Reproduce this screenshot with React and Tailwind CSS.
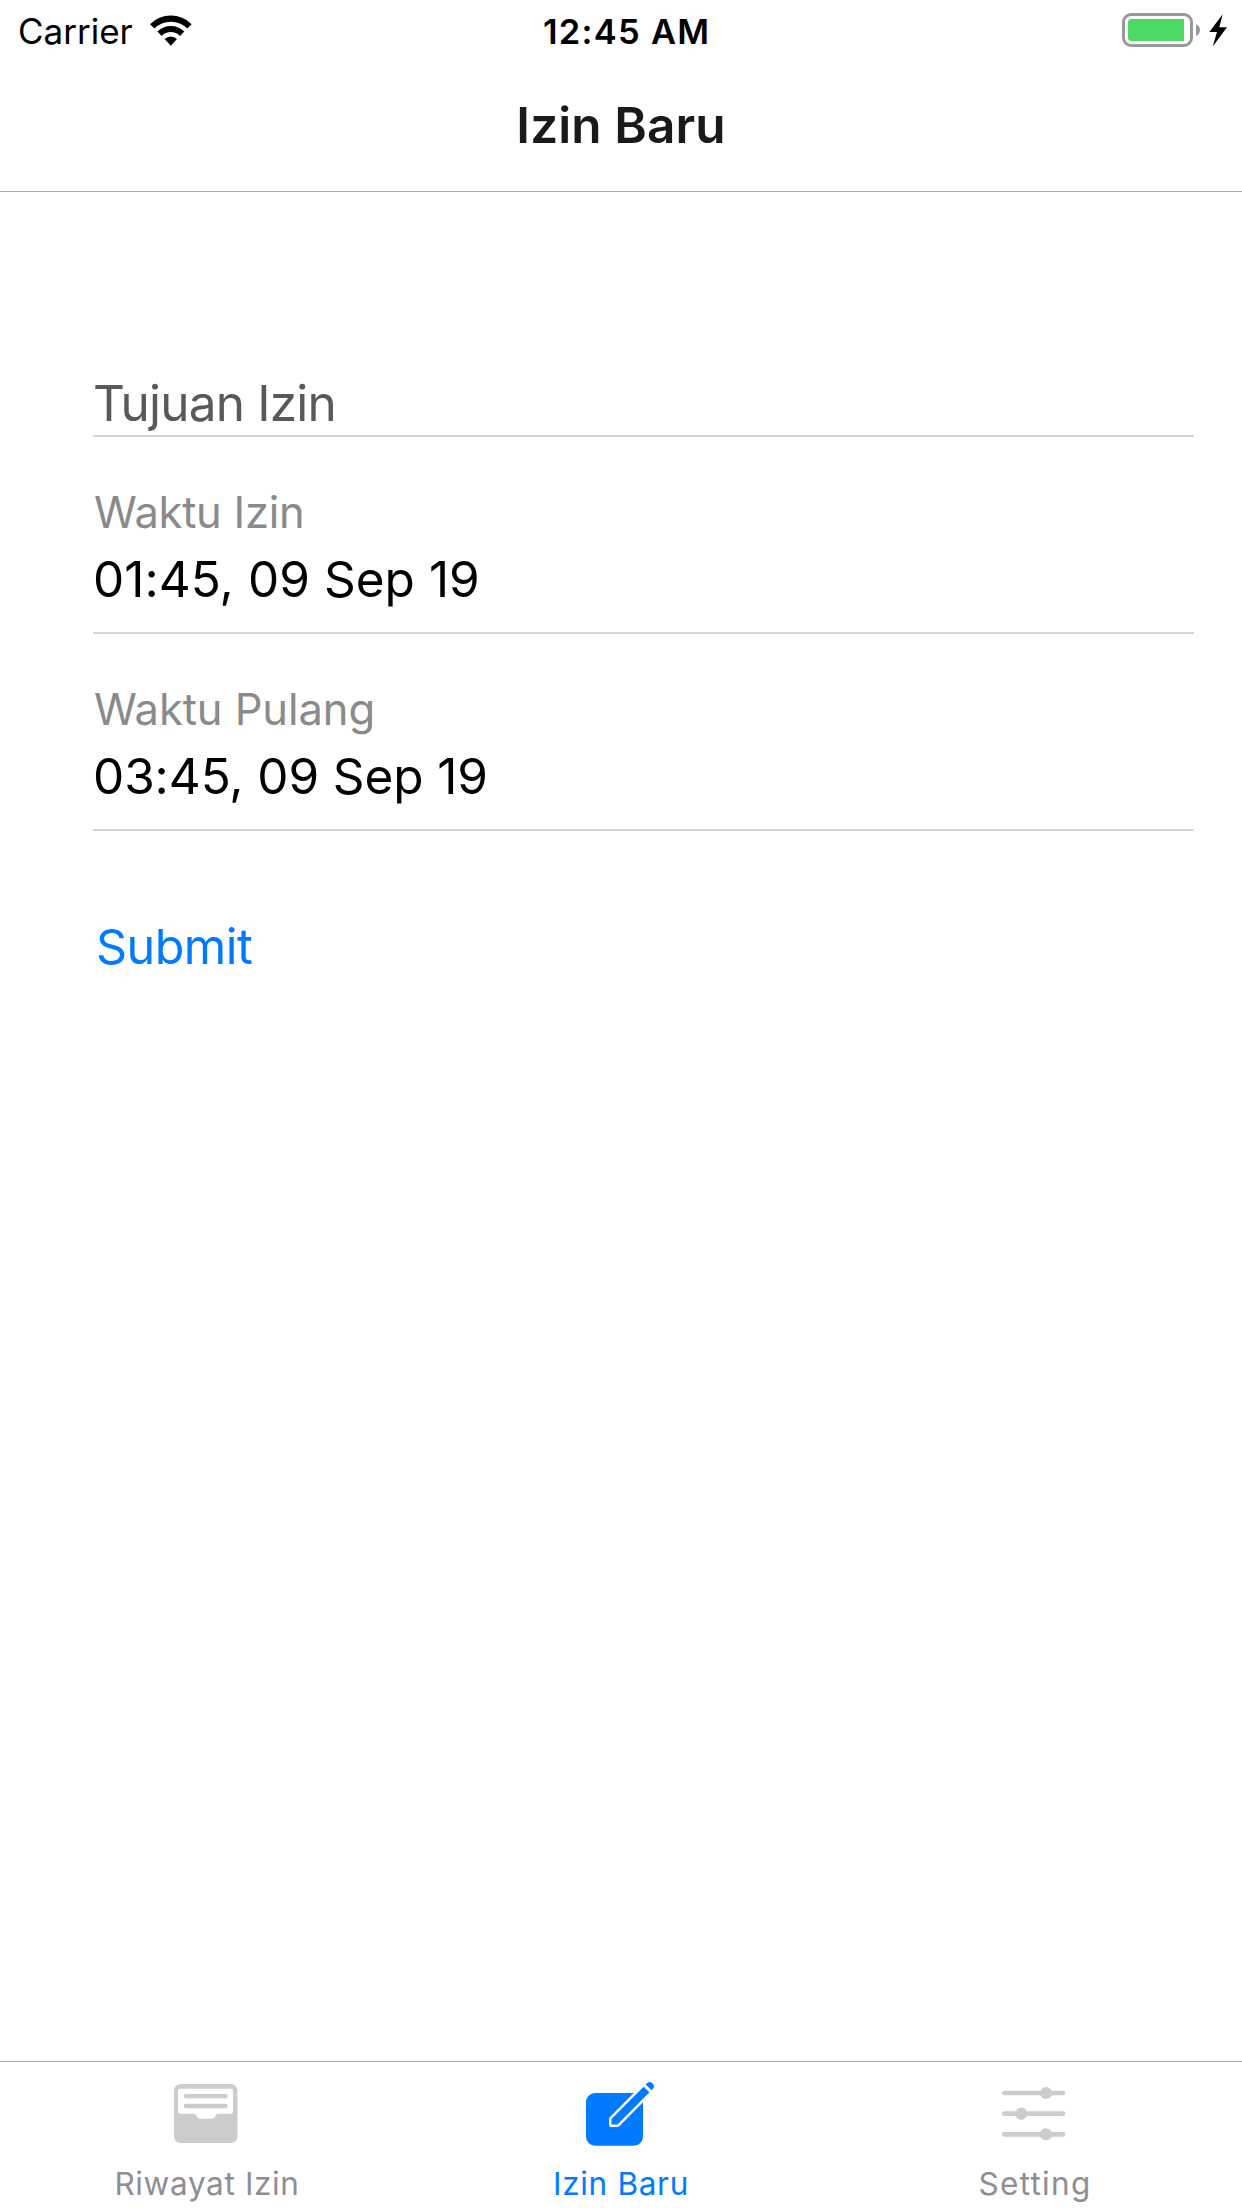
import React, { useState } from "react";

const WifiIcon = () => (
  <svg width="42" height="31" viewBox="450 43 126 93" fill="none" stroke="#000" strokeWidth="18.5">
    <path d="M456.6 77.1A79 79 0 0 1 568.4 77.1" />
    <path d="M478.6 99.1A48 48 0 0 1 546.4 99.1" />
    <path d="M512.5 135L494 115A26.5 26.5 0 0 1 531 115Z" fill="#000" stroke="none" />
  </svg>
);

const BatteryIcon = () => (
  <svg width="106" height="34" viewBox="0 0 106 34" fill="none">
    <rect x="1.5" y="1.5" width="68" height="31" rx="7.5" stroke="#999" strokeWidth="3" />
    <path d="M9.5 6H62V28H9.5Q6 28 6 24.5V9.5Q6 6 9.5 6Z" fill="#4cd964" />
    <path d="M74 11Q78 13 78 17T74 23Z" fill="#999" />
    <path d="M100.7 1.2L87.3 19H95L90.7 33.4L105 14.3H97.3Z" fill="#000" />
  </svg>
);

const ArchiveIcon = () => (
  <svg width="80" height="101" viewBox="0 0 80 101" fill="#ccc">
    <rect x="7" y="22" width="63.5" height="59" rx="6.5" />
    <path
      d="M13 26.7H64Q66 26.7 66 28.7V49.7Q66 51.7 64 51.7H51.5Q49.4 51.7 48.7 53.4Q47.3 56.7 44.8 56.7H33.2Q30.7 56.7 29.2 53.6Q28.4 51.7 26.3 51.7H13Q11 51.7 11 49.7V28.7Q11 26.7 13 26.7Z"
      fill="#fff"
    />
    <path d="M18.9 34.2H58.6M18.9 44H58.6" stroke="#ccc" strokeWidth="4.3" strokeLinecap="round" />
  </svg>
);

const ComposeIcon = () => (
  <svg width="80" height="101" viewBox="0 0 80 101" fill="#007aff">
    <rect x="5" y="31" width="57" height="52.7" rx="9" />
    <path
      d="M30.5 57L62.6 24.7L68.4 30.3L36.5 62.6H30.5Z"
      stroke="#fff"
      strokeWidth="5"
      strokeLinejoin="round"
    />
    <path d="M30.5 57L62.6 24.7L68.4 30.3L36.5 62.6H30.5Z" />
    <path d="M64.7 22.6L66.6 20.8Q68.8 19 71.2 21.2Q74 24 72.5 26L70.5 28.2Z" />
  </svg>
);

const OptionsIcon = () => (
  <svg width="80" height="101" viewBox="0 0 80 101" fill="#ccc">
    <path
      d="M9.3 31H68M9.3 51.6H68M9.3 72.3H68"
      stroke="#ccc"
      strokeWidth="4.7"
      strokeLinecap="round"
    />
    <circle cx="51" cy="31" r="6.1" />
    <circle cx="26.3" cy="51.6" r="6.1" />
    <circle cx="51" cy="72.3" r="6.1" />
  </svg>
);

const DateField = ({ label, value, labelSpacing, valueSpacing }) => (
  <div className="mt-[47px] border-b-2 border-[#d6d5db] pb-[23px]">
    <p className={`pl-px text-[43.5px] leading-[56px] text-[#8a8a8a] ${labelSpacing}`}>{label}</p>
    <p className={`mt-[9px] text-[49.5px] leading-[60px] text-black ${valueSpacing}`}>{value}</p>
  </div>
);

const tabs = [
  { title: "Riwayat Izin", Icon: ArchiveIcon, spacing: "tracking-[0.65px]" },
  { title: "Izin Baru", Icon: ComposeIcon, spacing: "tracking-[0.7px]" },
  { title: "Setting", Icon: OptionsIcon, spacing: "tracking-[1.3px]" },
];

const App = () => {
  const [active, setActive] = useState("Izin Baru");

  return (
    <div className="flex h-screen flex-col bg-white font-[Inter,sans-serif]">
      <div className="flex h-[62px] items-center text-black">
        <div className="flex w-[543px] items-center pl-[18px]">
          <span className="w-[132px] text-[35px] leading-[62px]">Carrier</span>
          <div className="pb-[2px]">
            <WifiIcon />
          </div>
        </div>
        <span className="pt-0.5 text-[34.5px] leading-[60px] font-semibold tracking-[1.25px]">12:45 AM</span>
        <div className="ml-auto pr-[14px] pb-0.5">
          <BatteryIcon />
        </div>
      </div>

      <header className="flex h-[130px] items-center justify-center border-b border-[#a9a9ab] pb-[3px]">
        <h1 className="text-[49.5px] leading-[60px] font-semibold tracking-[0.1px] text-[#1a1a1a]">
          Izin Baru
        </h1>
      </header>

      <main className="flex-1 pt-[181px] pr-12 pl-[93px]">
        <div className="border-b-2 border-[#d6d5db] pb-0.5">
          <p className="text-[49.5px] leading-[60px] tracking-[-0.79px] text-[#595959]">Tujuan Izin</p>
        </div>
        <DateField
          label="Waktu Izin"
          value="01:45, 09 Sep 19"
          labelSpacing="tracking-[-0.27px]"
          valueSpacing="tracking-[0.05px]"
        />
        <DateField
          label="Waktu Pulang"
          value="03:45, 09 Sep 19"
          labelSpacing="tracking-[-0.08px]"
          valueSpacing="tracking-[-0.1px]"
        />
        <button className="mt-[86px] block pl-[3px] text-[48.5px] leading-[60px] tracking-[-0.55px] text-[#007aff]">
          Submit
        </button>
      </main>

      <nav className="grid h-[147px] grid-cols-3 border-t border-[#a9a9ab]">
        {tabs.map(({ title, Icon, spacing }) => (
          <button
            key={title}
            onClick={() => setActive(title)}
            className={`flex flex-col items-center ${active === title ? "text-[#007aff]" : "text-[#8e8e93]"}`}
          >
            <Icon />
            <span className={`text-[31.5px] leading-[42px] ${spacing}`}>{title}</span>
          </button>
        ))}
      </nav>
    </div>
  );
};

export default App;
